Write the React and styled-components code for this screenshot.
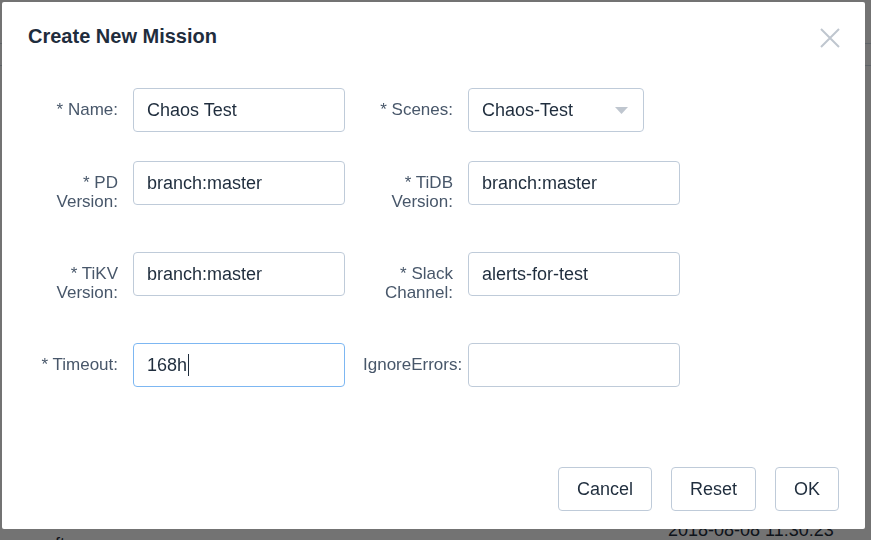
import styled, { createGlobalStyle } from 'styled-components';

const GlobalStyle = createGlobalStyle`
  html, body {
    margin: 0;
    padding: 0;
  }
  body {
    width: 871px;
    height: 540px;
    overflow: hidden;
    background: #fff;
    font-family: "Liberation Sans", Arial, sans-serif;
    color: #1f2d3d;
  }
  * {
    box-sizing: border-box;
  }
`;

/* the mission list lying behind the dialog */
const Page = styled.div`
  height: 540px;
  overflow: hidden;
  background: #fff;
`;

const PageHeader = styled.div`
  height: 44px;
  border-bottom: 1px solid #d1dbe5;
`;

const TableHead = styled.div`
  height: 22px;
  border-bottom: 1px solid #d1dbe5;
`;

const TableBody = styled.div`
  padding-top: 452px;
`;

const TableRow = styled.div`
  display: flex;
  height: 40px;
  font-size: 18px;
  line-height: 24px;
`;

const Cell = styled.div`
  width: ${(p) => p.$width}px;
  padding-top: ${(p) => p.$offset || 0}px;
  white-space: nowrap;
`;

/* dialog */
const Overlay = styled.div`
  position: fixed;
  inset: 0;
  display: flex;
  align-items: flex-start;
  padding: 2px 0 0 2px;
  background: rgba(0, 0, 0, 0.55);
`;

const Modal = styled.div`
  width: 863px;
  height: 527px;
  display: flex;
  flex-direction: column;
  background: #fff;
  border-radius: 2px;
`;

const Header = styled.div`
  display: flex;
  justify-content: space-between;
  align-items: flex-start;
  padding: 22px 25px 0 26px;
`;

const Title = styled.h2`
  margin: 0;
  font-size: 20px;
  line-height: 24px;
  font-weight: 700;
  color: #1f2d3d;
`;

const Close = styled.button`
  margin-top: 4px;
  padding: 0;
  border: 0;
  background: none;
  width: 20px;
  height: 20px;
  display: flex;
`;

const Form = styled.div`
  padding: 40px 0 0 26px;
`;

const Row = styled.div`
  display: flex;
  gap: 18px;
  margin-bottom: 29px;
`;

const Item = styled.div`
  display: flex;
  align-items: flex-start;
`;

const Label = styled.label`
  width: 105px;
  padding: 12px 15px 12px 0;
  text-align: right;
  font-size: 17px;
  line-height: 19px;
  color: #48576a;
`;

const Field = styled.div`
  width: ${(p) => p.$width || 212}px;
  height: 44px;
  display: flex;
  align-items: center;
  justify-content: space-between;
  padding: 0 15px 0 13px;
  border: 1px solid ${(p) => (p.$focused ? '#7db7f2' : '#bfcbd9')};
  border-radius: 4px;
  font-size: 18px;
  color: #1f2d3d;
  background: #fff;
`;

const Value = styled.span`
  display: flex;
  align-items: center;
  white-space: nowrap;
`;

const Caret = styled.span`
  width: 1px;
  height: 22px;
  margin-left: 1px;
  background: #1f2d3d;
`;

const Footer = styled.div`
  margin-top: auto;
  display: flex;
  justify-content: flex-end;
  gap: 19px;
  padding: 0 26px 18px 0;
`;

const Button = styled.button`
  height: 44px;
  padding: 0 18px;
  border: 1px solid #bfcbd9;
  border-radius: 4px;
  background: #fff;
  font-family: inherit;
  font-size: 18px;
  color: #1f2d3d;
`;

function CloseIcon() {
  return (
    <svg width="20" height="20" viewBox="0 0 20 20">
      <path d="M1 1 L19 19 M19 1 L1 19" stroke="#bfc6cf" strokeWidth="2" />
    </svg>
  );
}

function Arrow() {
  return (
    <svg width="13" height="7" viewBox="0 0 13 7">
      <polygon points="0,0 13,0 6.5,7" fill="#bfc6cf" />
    </svg>
  );
}

function Input({ label, value, width, focused, select }) {
  return (
    <Item>
      <Label>{label}</Label>
      <Field $width={width} $focused={focused}>
        <Value>
          {value}
          {focused && <Caret />}
        </Value>
        {select && <Arrow />}
      </Field>
    </Item>
  );
}

export default function App() {
  return (
    <>
      <GlobalStyle />
      <Page>
        <PageHeader />
        <TableHead />
        <TableBody>
          <TableRow>
            <Cell $width={55} />
            <Cell $width={193} $offset={14}>ft</Cell>
            <Cell $width={420} $offset={17}>STOPPED</Cell>
            <Cell $width={200}>2018-08-08 11:30:23</Cell>
          </TableRow>
        </TableBody>
      </Page>
      <Overlay>
        <Modal>
          <Header>
            <Title>Create New Mission</Title>
            <Close aria-label="Close">
              <CloseIcon />
            </Close>
          </Header>
          <Form>
            <Row>
              <Input label="* Name:" value="Chaos Test" />
              <Input label="* Scenes:" value="Chaos-Test" width={176} select />
            </Row>
            <Row>
              <Input label="* PD Version:" value="branch:master" />
              <Input label="* TiDB Version:" value="branch:master" />
            </Row>
            <Row>
              <Input label="* TiKV Version:" value="branch:master" />
              <Input label="* Slack Channel:" value="alerts-for-test" />
            </Row>
            <Row>
              <Input label="* Timeout:" value="168h" focused />
              <Input label="IgnoreErrors:" value="" />
            </Row>
          </Form>
          <Footer>
            <Button>Cancel</Button>
            <Button>Reset</Button>
            <Button>OK</Button>
          </Footer>
        </Modal>
      </Overlay>
    </>
  );
}
